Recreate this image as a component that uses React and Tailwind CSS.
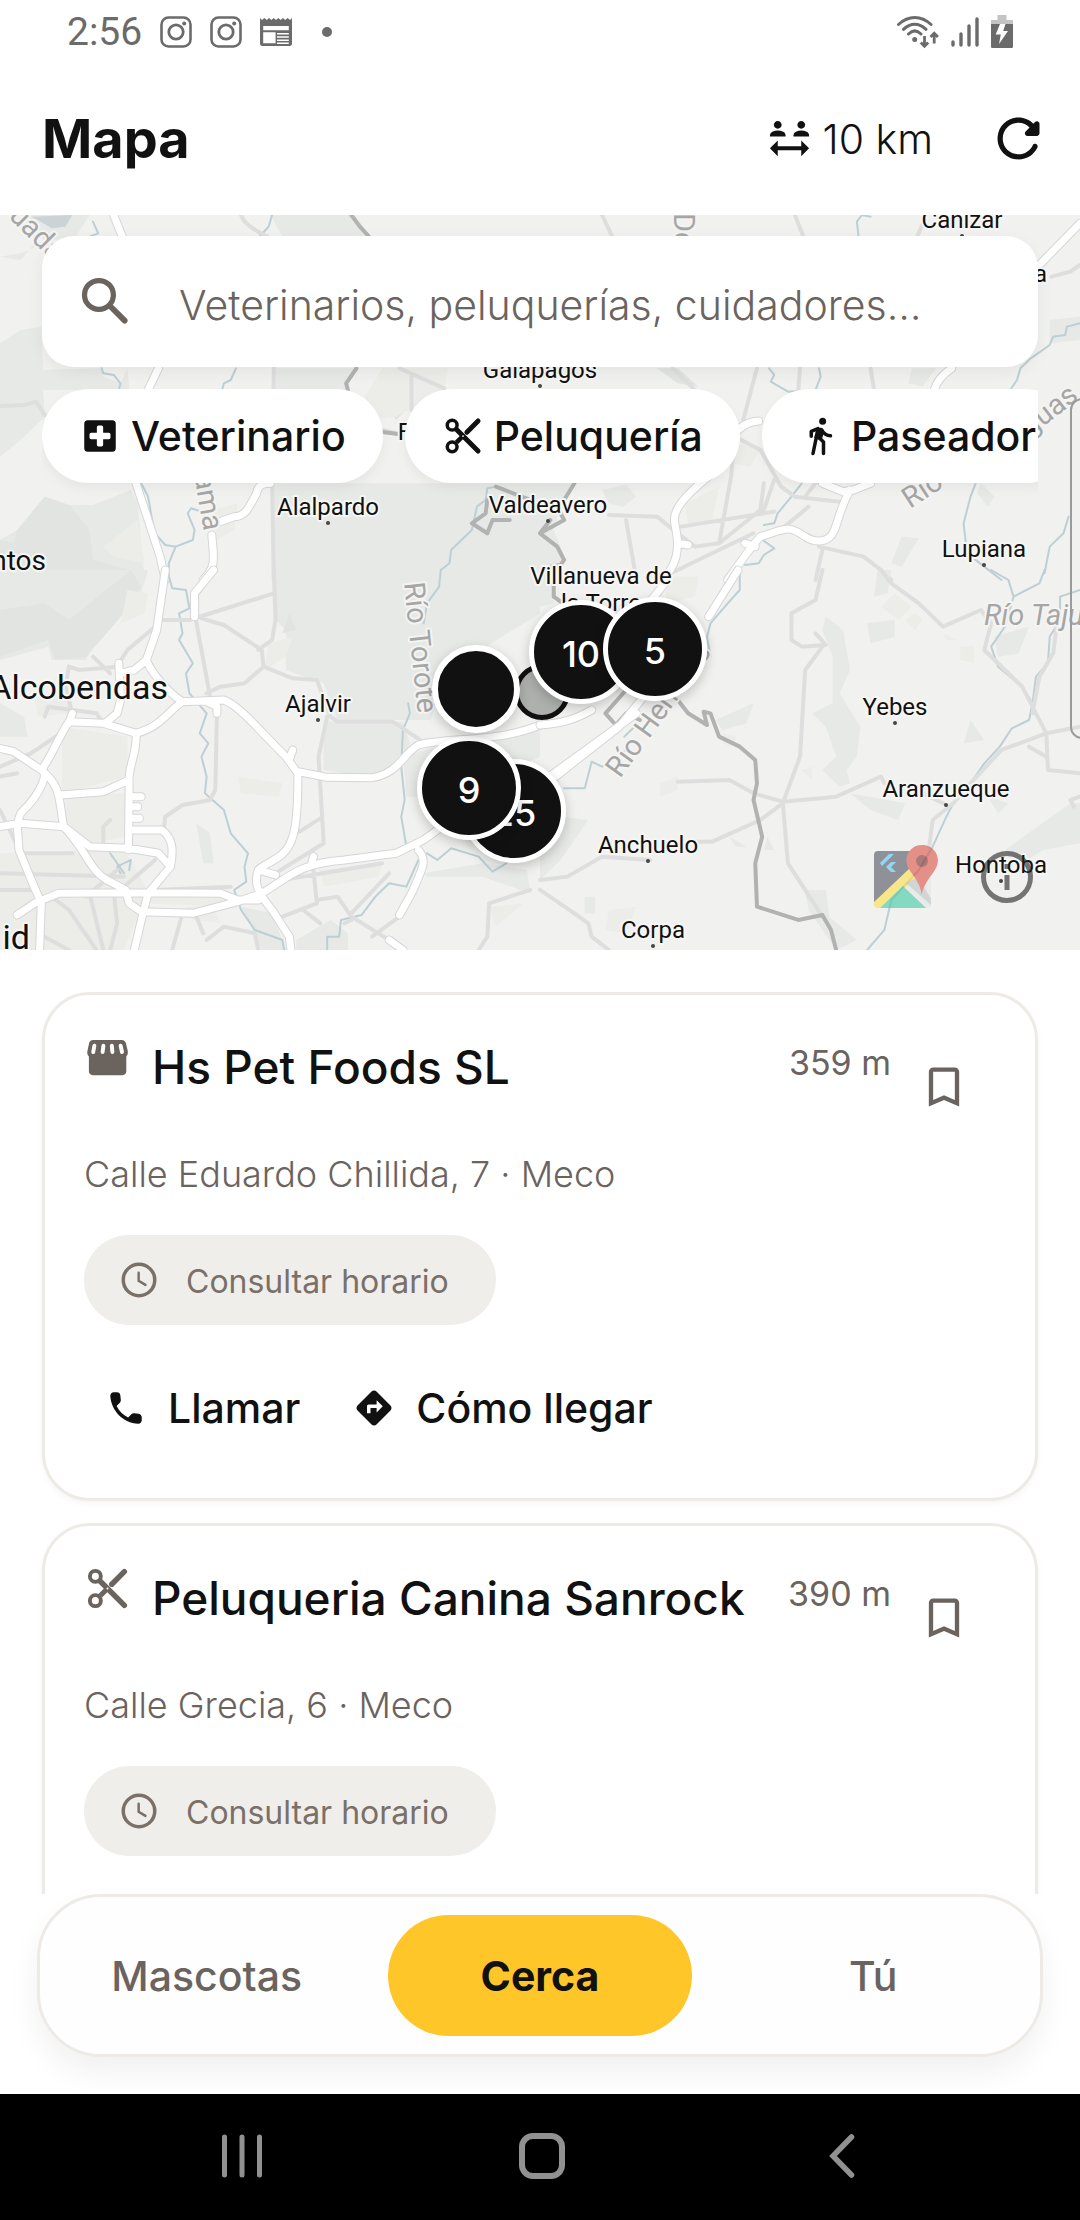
import React from "react";
import { MdDirections, MdSocialDistance, MdBookmarkBorder } from "react-icons/md";

const FONT = "font-['Inter','Open_Sans',sans-serif]";

/* ---------- icons ---------- */

function ScissorsIcon({ className = "" }) {
  return (
    <svg viewBox="0 0 24 24" className={className} fill="none" aria-hidden="true">
      <circle cx="5.8" cy="5.8" r="2.8" stroke="currentColor" strokeWidth="2" />
      <circle cx="5.8" cy="18.2" r="2.8" stroke="currentColor" strokeWidth="2" />
      <path d="M8.3 8.3 20.6 20.6" stroke="currentColor" strokeWidth="2.8" strokeLinecap="round" />
      <path d="M8.3 15.7 11.5 12.5" stroke="currentColor" strokeWidth="2.6" />
      <path d="M14.2 9.8 20.6 3.4" stroke="currentColor" strokeWidth="2.8" strokeLinecap="round" />
      <circle cx="12" cy="12" r=".5" fill="#fff" />
    </svg>
  );
}

function HospitalIcon({ className = "" }) {
  return (
    <svg viewBox="0 0 24 24" className={className} aria-hidden="true">
      <path
        fill="currentColor"
        fillRule="evenodd"
        d="M5 3h14a2 2 0 0 1 2 2v14a2 2 0 0 1-2 2H5a2 2 0 0 1-2-2V5a2 2 0 0 1 2-2Zm5.200 4v3.200H7a1 1 0 0 0-1 1v1.600a1 1 0 0 0 1 1h3.200V17a1 1 0 0 0 1 1h1.600a1 1 0 0 0 1-1v-3.200H17a1 1 0 0 0 1-1v-1.600a1 1 0 0 0-1-1h-3.200V7a1 1 0 0 0-1-1h-1.600a1 1 0 0 0-1 1Z"
      />
    </svg>
  );
}

function WalkIcon({ className = "" }) {
  return (
    <svg viewBox="0 0 24 24" className={className} aria-hidden="true">
      <circle cx="13.5" cy="3.5" r="2" fill="currentColor" />
      <path
        fill="none"
        stroke="currentColor"
        strokeWidth="2"
        strokeLinecap="round"
        strokeLinejoin="round"
        d="M7 12.2V9.3l3.8-1.5M8 22l2-9.6M14 22v-6.6l-2.6-2.6M13 8.6c1.2 2 2.8 3.1 5 3.3"
      />
      <path fill="currentColor" d="m9.8 8.2 2-.9c.9-.2 1.6.2 2 .9l.6 1.4-1.3 4.1 1.2 1.4-4.9-1.7-.7-.4Z" />
    </svg>
  );
}

function StoreIcon({ className = "" }) {
  return (
    <svg viewBox="0 0 24 24" className={className} aria-hidden="true">
      <path
        fill="currentColor"
        d="M4.6 3h14.8c.9 0 1.6.6 1.9 1.4l1 4c.3 1.3 0 2.300-.7 3.100V19c0 1.100-.8 2-1.900 2H4.400c-1.100 0-1.900-.9-1.900-2v-7.500c-.8-.8-1-1.900-.7-3.100l.9-4C2.900 3.600 3.700 3 4.600 3Z"
      />
      <path
        fill="none"
        stroke="#fff"
        strokeWidth="2"
        strokeLinecap="round"
        d="M5.3 6l-.6 3.200M9.900 6l-.4 3.200M14.200 6l.3 3.200M18.700 6l.7 3.200"
      />
    </svg>
  );
}

function ClockIcon({ className = "" }) {
  return (
    <svg viewBox="0 0 24 24" className={className} fill="none" stroke="currentColor" aria-hidden="true">
      <circle cx="12" cy="12" r="9" strokeWidth="2" />
      <path d="M11.8 7.8v4.700l3.900 2.300" strokeWidth="1.400" strokeLinecap="round" />
    </svg>
  );
}

function PhoneIcon({ className = "" }) {
  return (
    <svg viewBox="0 0 24 24" className={className} aria-hidden="true">
      <path
        fill="currentColor"
        d="m19.23 15.26-2.54-.29a1.99 1.99 0 0 0-1.64.57l-1.84 1.84a15.045 15.045 0 0 1-6.59-6.59l1.85-1.85c.43-.43.64-1.03.57-1.64l-.29-2.520a2.001 2.001 0 0 0-1.990-1.770H5.030c-1.130 0-2.070.94-2 2.070.53 8.540 7.360 15.360 15.890 15.890 1.130.07 2.070-.87 2.070-2v-1.730c.01-1.010-.75-1.860-1.760-1.980Z"
      />
    </svg>
  );
}

function RefreshIcon({ className = "" }) {
  return (
    <svg viewBox="0 0 24 24" className={className} aria-hidden="true">
      <path
        fill="currentColor"
        d="M17.65 6.35c-1.63-1.63-3.94-2.57-6.48-2.31-3.67.37-6.69 3.35-7.1 7.02C3.52 15.91 7.27 20 12 20c3.19 0 5.93-1.87 7.21-4.56.32-.67-.16-1.44-.9-1.44-.37 0-.72.2-.88.53-1.13 2.43-3.84 3.97-6.8 3.31-2.22-.49-4.01-2.3-4.48-4.52C5.31 9.44 8.26 6 12 6c1.66 0 3.14.69 4.22 1.78l-1.51 1.51c-.63.63-.19 1.71.7 1.71H19c.55 0 1-.45 1-1V6.41c0-.89-1.08-1.34-1.71-.71l-.64.65z"
      />
    </svg>
  );
}

function SearchIcon({ className = "" }) {
  return (
    <svg viewBox="0 0 24 24" className={className} fill="none" stroke="currentColor" aria-hidden="true">
      <circle cx="9.5" cy="9.5" r="5.5" strokeWidth="2" />
      <path d="m14.300 14.300 5 5" strokeWidth="2.200" strokeLinecap="round" />
    </svg>
  );
}

function InstagramIcon() {
  return (
    <svg viewBox="0 0 32 32" className="size-8" fill="none" stroke="currentColor" aria-hidden="true">
      <rect x="1.5" y="1.5" width="29" height="29" rx="7" strokeWidth="2.600" />
      <circle cx="16" cy="16" r="7.200" strokeWidth="2.800" />
      <circle cx="24.200" cy="7.600" r="2" fill="currentColor" stroke="none" />
    </svg>
  );
}

function NewsIcon() {
  return (
    <svg viewBox="0 0 32 32" className="size-8" aria-hidden="true">
      <path
        fill="currentColor"
        fillRule="evenodd"
        d="M0 2l2 2 2.500-2 2.300 2 2.300-2 2.300 2 2.300-2 2.300 2 2.300-2 2.300 2 2.300-2 2.300 2 2.300-2 2.500 2L32 2v25.500c0 1.400-.9 2.500-2.300 2.500H2.300C.9 30 0 28.900 0 27.500V2Zm3.200 8v4.200h25.600V10H3.200Zm0 6.200v11h12.400v-11H3.200Z"
      />
      <path stroke="#fff" strokeWidth="1.500" d="M17 17.800h11.800M17 21h11.800M17 24.200h11.800M17 27.200h11.800" />
    </svg>
  );
}

function WifiIcon() {
  return (
    <svg viewBox="0 0 42 34" className="h-[34px] w-[42px]" fill="none" stroke="currentColor" aria-hidden="true">
      <path d="M1.5 9.500c10-9.300 22.500-9.300 32.500 0M6.500 14.300c7-6.800 15.500-6.800 22.500 0M11.500 19c4-4 8.500-4 12.500 0" strokeWidth="3" strokeLinecap="round" />
      <circle cx="17.700" cy="24.500" r="2.500" fill="currentColor" stroke="none" />
      <path d="M27.500 21v9M23.800 27.500l3.700 3.700 3.700-3.700M37.200 28.500v-9M33.500 22l3.700-3.700 3.700 3.700" strokeWidth="2.800" />
    </svg>
  );
}

function SignalIcon() {
  return (
    <svg viewBox="0 0 28 32" className="h-8 w-7" stroke="currentColor" strokeWidth="3.400" strokeLinecap="round" aria-hidden="true">
      <path d="M2 26v3M10 18v11M18 10v19M26 3v26" />
    </svg>
  );
}

function BatteryIcon() {
  return (
    <svg viewBox="0 0 22 34" className="h-[34px] w-[22px]" aria-hidden="true">
      <path fill="#c4c4c4" d="M6.500 0h9v5H22v6H0V5h6.500Z" />
      <path fill="currentColor" d="M0 9h22v22.500c0 1-.6 1.500-1.500 1.500h-19C.6 33 0 32.500 0 31.500Z" />
      <path fill="#fff" d="M9 9h5.500l-2.300 7H17L8 29l1.800-9.500H4.700Z" />
    </svg>
  );
}

/* ---------- map ---------- */

// Each tile carries its own coordinate space, placed on the map by `transform`.
const TILES = [
  {
    id: "nw",
    transform: "translate(0 -5) scale(.3444 .3333)",
    woods:
      "M0 140 60 150 100 100 160 90 220 80 260 15 60 15 110 60 130 100 60 130ZM0 400 60 360 120 350 125 480 290 475 300 500 350 520 370 475 375 540 125 540 130 620 60 690 0 740ZM785 15 1030 15 1075 80 820 80ZM795 475 1030 475 1000 540 880 650 795 600ZM790 820 1568 820 1568 1110 795 1110ZM50 960 130 860 200 885 270 885 380 840 400 880 420 1110 0 1110 0 990Z",
    dark: "M50 960 130 860 200 885 260 960 270 1050 410 1090 410 1110 0 1110 0 990 40 1000ZM1110 560 1170 540 1180 600 1150 630Z",
    urban:
      "M1060 560 1110 475 1300 475 1290 540 1150 620 1060 630ZM540 540 700 540 560 620 440 600ZM300 1010 400 930 420 1060 330 1040ZM620 900 690 880 680 960 630 990Z",
    water: "M90 20 210 15 190 50 150 55 110 30Z",
    rivers:
      "M790 15 780 50 755 78M295 475 300 490 330 495 350 520 345 540M685 475 670 510 650 520 645 540M410 820 430 860 440 920 450 970 480 1005 510 1010 560 990 565 960 545 910 555 895 585 905M510 1010 490 1060 490 1110M1440 830 1415 835 1410 870 1385 890 1370 960 1310 1020 1305 1060 1280 1080 1275 1110M260 80 285 70 270 35",
    minor:
      "M700 15C710 45 740 60 785 85M795 475 790 820 795 1110M1160 475 1290 535M1195 500V600M0 588 70 585 105 575 130 615M1110 660 1150 670",
    major: "M330 15 355 80M460 475 430 540M395 820 430 930 465 1040 480 1110M785 820C770 820 750 820 745 850 720 900 710 920 680 920L640 935M615 975C620 1040 630 1070 590 1110",
    border: "M1020 15 1045 50 1070 78M1035 475 1005 520 1010 540M1105 665 1155 672M1440 830 1540 870M1415 870 1410 910 1370 940 1415 970 1430 930 1480 930",
  },
  {
    id: "ne",
    transform: "translate(540 -5) scale(.3444 .3333)",
    woods:
      "M180 840 250 825 280 860 240 890 200 880ZM1080 475 1150 475 1110 530 1070 520ZM1480 330 1568 320 1568 390 1480 400ZM1050 980 1100 985 1050 1070 1020 1060ZM0 820 100 820 60 880 40 960 75 1050 30 1110 0 1110ZM1280 820 1320 860 1300 890 1270 850Z",
    dark: "M340 475 400 475 460 530 400 520Z",
    urban: "M420 880 520 830 500 930 430 940ZM840 540 900 560 860 600ZM570 700 640 720 610 770 560 760Z",
    water: "",
    rivers:
      "M925 80 920 35 935 15 960 20M1568 340 1530 350 1525 375 1490 380 1480 405 1425 445 1395 475 1385 510 1365 540M665 475 680 495 670 515 720 545 800 540 815 500 810 475M760 820 730 860 690 910 680 940 650 945M640 985 680 1015 650 1035 635 1060 595 1065M1265 820 1250 860 1240 900 1230 940 1240 1030 1290 1070 1340 1110M1535 920 1520 970 1480 1010 1465 1090",
    minor:
      "M180 15 210 80M740 15 765 80M1110 45 1095 80M1485 200 1540 185 1568 165M385 475 450 540M630 475 590 630M755 475 750 540M960 475 970 540M565 680 555 800 520 1000M565 680 640 720 700 830 740 860 870 875M410 950 680 905M650 820 640 900 520 1000 450 1010 400 970 340 920 200 915M680 810 650 900M250 930 280 1110M780 890 710 950M800 820 770 860M810 1010 940 1040 990 1080 1020 1110M820 1020 800 1110M380 1090 620 970",
    major:
      "M1568 40 1445 170M1195 475C1160 500 1150 520 1145 540M635 633C600 635 575 655 560 680M500 790C430 850 390 890 390 930 395 970 405 990 395 1040 385 1080 370 1090 350 1110M400 1000 430 1005M820 820 880 845 910 840 960 820M900 840C870 900 870 920 855 960 840 1000 800 1000 770 980 720 945 720 955 640 980 620 1000 600 1030 545 1110M595 1000 625 1010",
    border: "M100 820 70 870 50 890 70 930 0 970 50 1010 70 1050 60 1065 30 1070M0 970 30 930",
  },
  {
    id: "sw",
    transform: "translate(0 355) scale(.3444 .3333)",
    woods:
      "M0 0 430 0 410 70 350 60 250 270 150 270 140 230 0 270ZM800 0 1568 0 1568 130 1300 300 1250 450 980 450 940 340 830 300 830 180 800 150ZM940 455 1170 455 1190 520 1160 600 1080 620 940 600ZM1170 560 1300 520 1530 470 1568 480 1568 560 1300 680 1180 680ZM0 400 70 440 80 500 0 500ZM570 760 610 790 620 880 590 880ZM700 1010 790 1030 830 1140 760 1140ZM860 1110 960 1050 1010 1090 1010 1140 860 1140ZM1230 910 1400 880 1530 900 1540 970 1400 920 1240 920Z",
    dark: "M0 120 130 100 200 150 380 0 410 50 360 130 250 260 160 270 140 210 0 260ZM840 130 860 180 820 190Z",
    urban:
      "M180 470 370 500 370 620 180 670ZM190 680 365 670 365 800 260 820 190 760ZM0 850 360 840 430 960 360 1140 0 1140ZM690 620 820 640 810 680 700 670ZM440 960 660 960 640 1010 440 1000ZM540 1010 620 1010 640 1060 560 1050ZM1420 1010 1520 1000 1440 1070ZM370 60 430 70 420 130 350 160ZM780 220 850 200 830 260 770 300ZM930 900 1110 880 1100 920 940 950ZM100 380 200 370 200 430 110 440Z",
    water: "",
    rivers:
      "M485 0 500 55 540 60 550 115 520 130 530 190 520 210 560 280 540 310 550 370 600 430 580 490 605 520 585 560 600 620 595 670 650 720 670 790 720 850 710 890 715 935 680 960 700 1020 740 1080 820 1110 825 1140M1280 0 1275 50 1240 100 1230 160M1185 400 1190 430 1170 480 1165 590 1175 690 1165 740 1180 830M1215 870 1180 950 1130 940 1090 980 1050 1035 990 1050 985 1100 950 1100 950 1140M1240 850 1270 870 1310 835 1390 860 1430 905 1470 880M350 910 340 890 380 870 375 900M320 850 360 910",
    minor:
      "M465 150 550 150 795 70M585 145 650 165 760 240 765 290 850 325 920 330 960 440 980 455 1140 455 1220 510M795 0 800 150 790 210 750 240M765 290 710 340 640 350 600 370M567 140 610 380M450 170 370 240 345 280M345 290 230 300 200 290 190 350 210 430M270 260 320 310M130 440 140 410 280 430 300 460M630 430 625 660 610 690 530 705 480 740 475 780M950 440 925 560 940 820 800 910M870 785 930 745M300 820 300 770 320 750M190 480 90 550 0 590M0 620 50 610M0 720 60 850M60 850 210 850M0 910 360 920M0 960 100 960M150 980 200 1020 280 1140M110 1090 200 1140M260 970 300 1140M330 960 340 1060 320 1140M360 950 450 870M340 900 250 980M450 960 670 950M530 1030 500 1140M570 1040 590 1090M600 1110 650 1070 740 1090 750 1140M910 900 920 1000 820 1040M820 930 1110 880M920 990 980 980 1020 1040 1130 1110M1130 910 1020 1030M880 1020 930 1060M1540 960 1420 1000 1415 1100 1390 1140M1020 1050 1000 1060M1160 1040 1080 1100",
    major:
      "M480 0 455 180 425 270 390 300 350 310M345 280 350 390 340 430 305 460M425 270C440 310 490 370 530 395L650 390C700 410 760 490 830 560L865 610C865 700 860 770 850 800 830 870 780 870 750 900 735 940 750 970 790 1020L840 1100 845 1140M600 395 630 410 630 430M620 0 565 70V140M530 395C490 420 470 470 395 490L300 460 200 455C160 520 150 560 120 600 140 600 130 660 60 730L50 760 55 840 95 940 120 1000 115 1140M210 430 200 460M0 535 40 545 120 600C180 650 170 690 185 770M395 490C400 550 370 590 375 640L373 840M375 780 470 780C510 810 500 860 495 890M380 680 410 680M380 710 400 710M380 745 405 745M375 630 300 665 175 675M0 770 60 760 185 770 260 830 373 835 460 850 495 890 430 970 415 1030 390 1140M185 770C250 840 260 900 310 930L365 960 375 1000 410 1025 560 1030 690 995 760 970M50 1035 100 1000 170 970 430 968 640 970 690 990 750 990M865 605 950 622 1080 623C1160 610 1170 550 1215 525 1300 500 1440 520 1568 465M760 970C830 930 860 880 1000 870L1150 850 1230 810 1270 780M1215 840C1240 870 1230 890 1195 970L1160 1035M750 900 800 915M910 860 905 880M1130 1110 1170 1140M850 540 840 570",
    border: "",
  },
  {
    id: "se",
    transform: "translate(540 355) scale(.3444 .3333)",
    woods:
      "M830 140 880 180 900 300 870 370 930 470 920 560 890 600 900 640 870 650 820 600 860 560 830 470 790 430 850 400 850 260 820 180ZM950 160 1030 150 1030 200 960 220ZM510 450 620 400 600 460 530 480ZM1250 450 1290 510 1230 520ZM1350 840 1540 700 1568 700 1568 820 1460 840 1400 880ZM1320 200 1420 170 1390 250 1330 260ZM0 800 60 740 140 750 60 870 0 930ZM130 980 160 980 160 1030 130 1030ZM770 960 830 960 840 1040 920 1110 860 1140 780 1020ZM900 670 1060 700 1040 750 960 720ZM550 800 600 830 570 830ZM660 800 680 840 650 840ZM980 0 1020 0 1010 70 970 80ZM1300 680 1360 700 1330 730ZM0 0 30 0 40 100 0 110Z",
    dark: "",
    urban:
      "M990 110 1030 70 1080 110 1040 150ZM1060 150 1090 130 1110 150 1090 180ZM1220 230 1260 230 1260 280 1220 270ZM350 640 400 620 400 660 350 680ZM200 1020 280 1010 250 1090 190 1080ZM360 20 460 20 450 80 370 100ZM530 490 570 500 560 530 530 520ZM1170 190 1210 210 1180 210ZM760 600 790 590 790 630Z",
    water: "",
    rivers:
      "M580 0 580 60 545 100 495 160 485 200 495 260M1465 0 1450 40 1375 80 1360 30 1310 0M1375 80 1350 170 1310 230 1330 290 1400 350 1430 400 1420 450 1370 475 1335 530 1290 580 1250 640 1200 700 1180 740 1140 830 1100 900 1020 990 1000 1080 950 1140M1568 60 1510 80 1510 150 1480 200 1475 280 1440 320 1430 400M70 655 130 655 150 575 180 590 250 540M270 475 245 500",
    minor:
      "M820 0 800 90 730 130 730 210 760 230 830 225 800 190M820 230 770 300 755 560 705 700 720 880 820 1040M400 635 550 630 620 670 705 695 860 680 990 620 1000 640M705 700 640 750 500 815 440 815M990 0 1020 40 1100 100 1170 170 1280 120 1310 160 1290 240 1400 350 1440 430 1470 490 1475 600 1568 610M1500 170 1490 250 1450 320 1430 430M1568 470 1470 490 1340 540 1250 640 1200 700 1140 750 1130 830M1568 680 1540 690 1550 710M1110 670 1170 700M0 930 80 920 180 860 320 870M0 960 100 1030 140 1060 150 1100 200 1140M1470 560 1420 530",
    major:
      "M575 0 490 140M460 180 230 470 45 620M370 30 300 120M280 430 0 640M0 465C60 460 100 450 150 420",
    border:
      "M400 390 430 430 485 465 475 425 495 430 520 500 580 530 625 570 630 640 620 690 645 800 625 880 630 1010 750 1050 820 1035 845 1080 860 1140M250 360 190 430 220 465 250 430 290 450M40 40 40 80 80 110",
  },
];

const TOWNS = [
  { name: "Cañizar", x: 962, y: 13 },
  { name: "Galápagos", x: 540, y: 163 },
  { name: "Alalpardo", x: 328, y: 300 },
  { name: "Valdeavero", x: 548, y: 298 },
  { name: "Lupiana", x: 984, y: 342 },
  { name: "Ajalvir", x: 318, y: 497 },
  { name: "Yebes", x: 895, y: 500 },
  { name: "Aranzueque", x: 946, y: 582 },
  { name: "Hontoba", x: 1001, y: 658 },
  { name: "Anchuelo", x: 648, y: 638 },
  { name: "Corpa", x: 653, y: 723 },
];

const PINS = [
  { label: "10", place: "left-[529px] top-[385px]" },
  { label: "5", place: "left-[603px] top-[382px]" },
  { label: "25", place: "left-[462px] top-[544px]" },
  { label: "9", place: "left-[417px] top-[521px]" },
];

function Tile({ tile }) {
  const line = { fill: "none", strokeLinejoin: "round", strokeLinecap: "round", vectorEffect: "non-scaling-stroke" };
  return (
    <g transform={tile.transform}>
      <path d={tile.woods} fill="#e6e9e6" />
      <path d={tile.dark} fill="#e1e4e1" />
      <path d={tile.urban} fill="#ecede8" />
      <path d={tile.water} fill="#ccd3d6" />
      <path d={tile.rivers} {...line} stroke="#bccfd5" strokeWidth="2" />
      <path d={tile.minor} {...line} stroke="#dedede" strokeWidth="4" />
      <path d={tile.border} {...line} stroke="#b2b2b2" strokeWidth="4" />
      <path d={tile.major} {...line} stroke="#d6d6d8" strokeWidth="9" />
      <path d={tile.major} {...line} stroke="#ffffff" strokeWidth="7" />
    </g>
  );
}

function MapCanvas() {
  return (
    <svg
      viewBox="0 0 1080 735"
      preserveAspectRatio="xMidYMid slice"
      className="block h-full w-full font-['Roboto',sans-serif]"
      role="img"
      aria-label="Mapa de la zona"
    >
      <rect width="1080" height="735" fill="#f1f1ef" />
      {TILES.map((tile) => (
        <Tile key={tile.id} tile={tile} />
      ))}

      {/* Rivers */}
      <g fill="#a6a6a6" fontSize="29" stroke="#f4f4f2" strokeWidth="4" strokeLinejoin="round" paintOrder="stroke">
        <text transform="translate(8 2) rotate(45)">uada</text>
        <text transform="translate(674 -2) rotate(90)">De</text>
        <text transform="translate(187 220) rotate(80)">Jarama</text>
        <text transform="translate(404 368) rotate(84)">Río Torote</text>
        <text transform="translate(620 564) rotate(-54)">Río Henares</text>
        <text transform="translate(910 294) rotate(-33)">Río</text>
        <text transform="translate(1030 222) rotate(-38)">guas</text>
        <text x="984" y="410" fontStyle="italic">Río Tajuña</text>
      </g>

      {/* Towns */}
      <g fill="#111" stroke="#f6f6f4" strokeWidth="4" strokeLinejoin="round" paintOrder="stroke">
        <g textAnchor="middle" fontSize="24">
          {TOWNS.map((town) => (
            <text key={town.name} x={town.x} y={town.y}>
              {town.name}
            </text>
          ))}
          <text x="601" y="369">Villanueva de</text>
          <text x="601" y="396">la Torre</text>
        </g>
        <g textAnchor="end">
          <text x="1047" y="67" fontSize="24">a</text>
          <text x="411" y="225" fontSize="24">F</text>
          <text x="46" y="355" fontSize="28">ntos</text>
          <text x="168" y="484" fontSize="34">Alcobendas</text>
          <text x="30" y="734" fontSize="34">id</text>
        </g>
      </g>
      <g fill="#444">
        {TOWNS.map((town) => (
          <circle key={town.name} cx={town.x} cy={town.y + 8} r="2" />
        ))}
      </g>
    </svg>
  );
}

function AttributionLogo() {
  return (
    <svg viewBox="0 0 64 64" className="size-16 opacity-60" aria-hidden="true">
      <path fill="#4d525f" d="M4 6h33v22L0 60V10a4 4 0 0 1 4-4Z" />
      <path fill="#e4e6e7" d="M30 40 57 12v48a3 3 0 0 1-3 3h-3Z" />
      <path fill="#fde047" d="M36 23 44 32 6 63H4a4 4 0 0 1-4-4v-2Z" />
      <path fill="#3fc9a5" d="M29 41 52 63H6Z" />
      <path fill="#bfc3c4" d="m44 32 13 22v6L32 38Z" />
      <path fill="#54c5f8" d="m6 18 9-9h5L8 21Zm6 4 5-5h5l-5 5 5 5h-5Z" />
      <path fill="#dc5046" d="M53 0a17 17 0 0 1 18 17c0 13-13 18-18 38-3-20-17-25-17-38A17 17 0 0 1 53 0Z" transform="scale(.9)" />
      <circle cx="48" cy="16" r="6" fill="#7d2b28" />
    </svg>
  );
}

function MapSection({ children }) {
  return (
    <section className="relative h-[735px] shrink-0 overflow-hidden">
      <MapCanvas />

      {/* Markers */}
      <span className="absolute left-[514px] top-[449px] size-14 rounded-full border-[5px] border-[#111] bg-[#aeb0ae]" />
      {PINS.map((pin) => (
        <button
          key={pin.label}
          type="button"
          className={`absolute flex size-[104px] items-center justify-center rounded-full border-[5px] border-white bg-[#111] pt-1 text-4xl font-medium text-white shadow-[0_4px_12px_rgba(0,0,0,0.2)] ${pin.place}`}
        >
          {pin.label}
        </button>
      ))}
      <button
        type="button"
        aria-label="Centro veterinario"
        className="absolute left-[432px] top-[430px] size-[88px] rounded-full border-6 border-white bg-[#111] shadow-[0_4px_12px_rgba(0,0,0,0.2)]"
      />

      {/* Side handle, partly off screen */}
      <span className="absolute -right-5 top-[183px] h-[341px] w-[30px] rounded-xl border-2 border-[#9b9b9b]" />

      <div className="absolute right-[47px] bottom-[41px] flex items-center gap-[43px]">
        <AttributionLogo />
        <button type="button" aria-label="Información" className="text-[#222] opacity-60">
          <svg viewBox="0 0 52 52" className="size-[52px]" fill="none" stroke="currentColor" strokeWidth="5">
            <circle cx="26" cy="26" r="23.5" />
            <path d="M26 24v15M26 13v5" />
          </svg>
        </button>
      </div>

      <div className="absolute inset-x-0 top-0 px-[42px] pt-[21px]">{children}</div>
    </section>
  );
}

/* ---------- page parts ---------- */

function StatusBar() {
  return (
    <div className="flex h-16 shrink-0 items-center justify-between px-[67px] text-[#6b6b6b]">
      <div className="flex items-center gap-[18px]">
        <span className="font-['Roboto',sans-serif] text-[39px] leading-[64px]">2:56</span>
        <InstagramIcon />
        <InstagramIcon />
        <NewsIcon />
        <span className="ml-3 size-[10px] rounded-full bg-current" />
      </div>
      <div className="flex items-center gap-3">
        <WifiIcon />
        <SignalIcon />
        <BatteryIcon />
      </div>
    </div>
  );
}

function Header() {
  return (
    <header className="flex h-[151px] shrink-0 items-center justify-between pr-[30px] pb-[2px] pl-[42px]">
      <h1 className="text-[54px] leading-[72px] font-bold">Mapa</h1>
      <div className="flex items-center gap-[54px]">
        <button type="button" className="flex items-center gap-[10px] text-[41px] leading-[52px] font-light">
          <MdSocialDistance className="size-[47px]" />
          10 km
        </button>
        <button type="button" aria-label="Actualizar">
          <RefreshIcon className="size-[63px]" />
        </button>
      </div>
    </header>
  );
}

const FILTERS = [
  { label: "Veterinario", Icon: HospitalIcon },
  { label: "Peluquería", Icon: ScissorsIcon },
  { label: "Paseador", Icon: WalkIcon },
];

function Search() {
  return (
    <label className="flex h-[131px] items-center gap-[42px] rounded-[32px] bg-white pl-8 shadow-[0_5px_16px_rgba(0,0,0,0.06)]">
      <SearchIcon className="size-[63px] shrink-0 text-[#6b635e]" />
      <span className="sr-only">Buscar</span>
      <input
        type="search"
        placeholder="Veterinarios, peluquerías, cuidadores…"
        className="min-w-0 flex-1 bg-transparent pt-[6px] text-[41px] leading-[52px] font-light outline-none placeholder:text-[#6b635e]"
      />
    </label>
  );
}

function Filters() {
  return (
    <div className="mt-[22px] flex gap-[22px] overflow-hidden pb-6">
      {FILTERS.map(({ label, Icon }) => (
        <button
          key={label}
          type="button"
          className="flex h-[94px] shrink-0 items-center gap-[10px] rounded-full bg-white px-[37px] text-[41px] leading-[52px] font-medium shadow-[0_5px_12px_rgba(0,0,0,0.05)]"
        >
          <Icon className="size-[42px]" />
          {label}
        </button>
      ))}
    </div>
  );
}

const PLACES = [
  { name: "Hs Pet Foods SL", distance: "359 m", address: "Calle Eduardo Chillida, 7 · Meco", Icon: StoreIcon },
  { name: "Peluqueria Canina Sanrock", distance: "390 m", address: "Calle Grecia, 6 · Meco", Icon: ScissorsIcon },
];

function PlaceCard({ place }) {
  const { name, distance, address, Icon } = place;
  return (
    <article className="rounded-[48px] border-[3px] border-[#eeebe7] bg-white px-[39px] pt-[39px] pb-[42px] shadow-[0_3px_6px_rgba(0,0,0,0.04)]">
      <div className="flex h-[105px] items-start text-[#6b635e]">
        <Icon className="size-[47px] shrink-0" />
        <h2 className="min-w-0 flex-1 pl-[21px] text-[46px] leading-[66px] font-medium whitespace-nowrap text-[#111]">
          {name}
        </h2>
        <span className="text-[34px] leading-[58px]">{distance}</span>
        <button type="button" aria-label="Guardar" className="flex size-[105px] items-center justify-center">
          <MdBookmarkBorder className="size-[52px]" />
        </button>
      </div>
      <p className="mt-2 text-4xl leading-[54px] font-light text-[#6b635e]">{address}</p>
      <div className="mt-[34px] inline-flex h-[90px] items-center gap-[26px] rounded-full bg-[#efeeea] pr-[47px] pl-[34px] text-[#7a7068]">
        <ClockIcon className="size-[42px]" />
        <span className="pt-1 text-[32px] leading-[42px]">Consultar horario</span>
      </div>
      <div className="mt-[35px] flex h-24 items-center gap-[11px]">
        <a href="#llamar" className="flex items-center gap-[21px] px-[21px] text-[41px] leading-[52px] font-medium">
          <PhoneIcon className="size-[42px]" />
          Llamar
        </a>
        <a href="#llegar" className="flex items-center gap-[21px] px-[21px] text-[41px] leading-[52px] font-medium">
          <MdDirections className="size-[42px]" />
          Cómo llegar
        </a>
      </div>
    </article>
  );
}

function TabBar() {
  return (
    <div className="shrink-0 px-[37px] pb-[37px]">
      <nav className="grid h-[163px] grid-cols-3 items-center rounded-[64px] border-[3px] border-[#eeebe7] bg-[#fefefe] text-[41px] leading-[52px] font-medium text-[#6b635e] shadow-[0_16px_32px_rgba(0,0,0,0.06)]">
        <a href="#mascotas" className="text-center">Mascotas</a>
        <a
          href="#cerca"
          aria-current="page"
          className="mx-[15px] flex h-[121px] items-center justify-center rounded-full bg-[#ffc62a] font-bold text-[#111]"
        >
          Cerca
        </a>
        <a href="#tu" className="text-center">Tú</a>
      </nav>
    </div>
  );
}

function SystemNav() {
  return (
    <div className="grid h-[126px] shrink-0 grid-cols-[1fr_125px_1fr] items-center bg-black pb-[3px] pl-1 text-[#919191]">
      <button type="button" aria-label="Recientes" className="flex justify-center">
        <svg viewBox="0 0 44 44" className="size-11" stroke="currentColor" strokeWidth="5" strokeLinecap="round">
          <path d="M4.5 3v38M22 3v38M39.5 3v38" />
        </svg>
      </button>
      <button type="button" aria-label="Inicio" className="flex justify-center">
        <svg viewBox="0 0 46 46" className="size-[46px]" fill="none" stroke="currentColor" strokeWidth="6">
          <rect x="3" y="3" width="40" height="40" rx="11" />
        </svg>
      </button>
      <button type="button" aria-label="Atrás" className="flex justify-center">
        <svg viewBox="0 0 28 44" className="h-11 w-7" fill="none" stroke="currentColor" strokeWidth="5.5" strokeLinecap="round">
          <path d="M23.5 3 5 22l18.5 19" />
        </svg>
      </button>
    </div>
  );
}

export default function App() {
  return (
    <div className={`flex h-screen flex-col overflow-hidden bg-white text-[#111] ${FONT}`}>
      <StatusBar />
      <Header />
      <MapSection>
        <Search />
        <Filters />
      </MapSection>
      <main className="flex min-h-0 flex-1 flex-col gap-[22px] overflow-hidden px-[42px] pt-[42px] *:shrink-0">
        {PLACES.map((place) => (
          <PlaceCard key={place.name} place={place} />
        ))}
      </main>
      <TabBar />
      <SystemNav />
    </div>
  );
}
